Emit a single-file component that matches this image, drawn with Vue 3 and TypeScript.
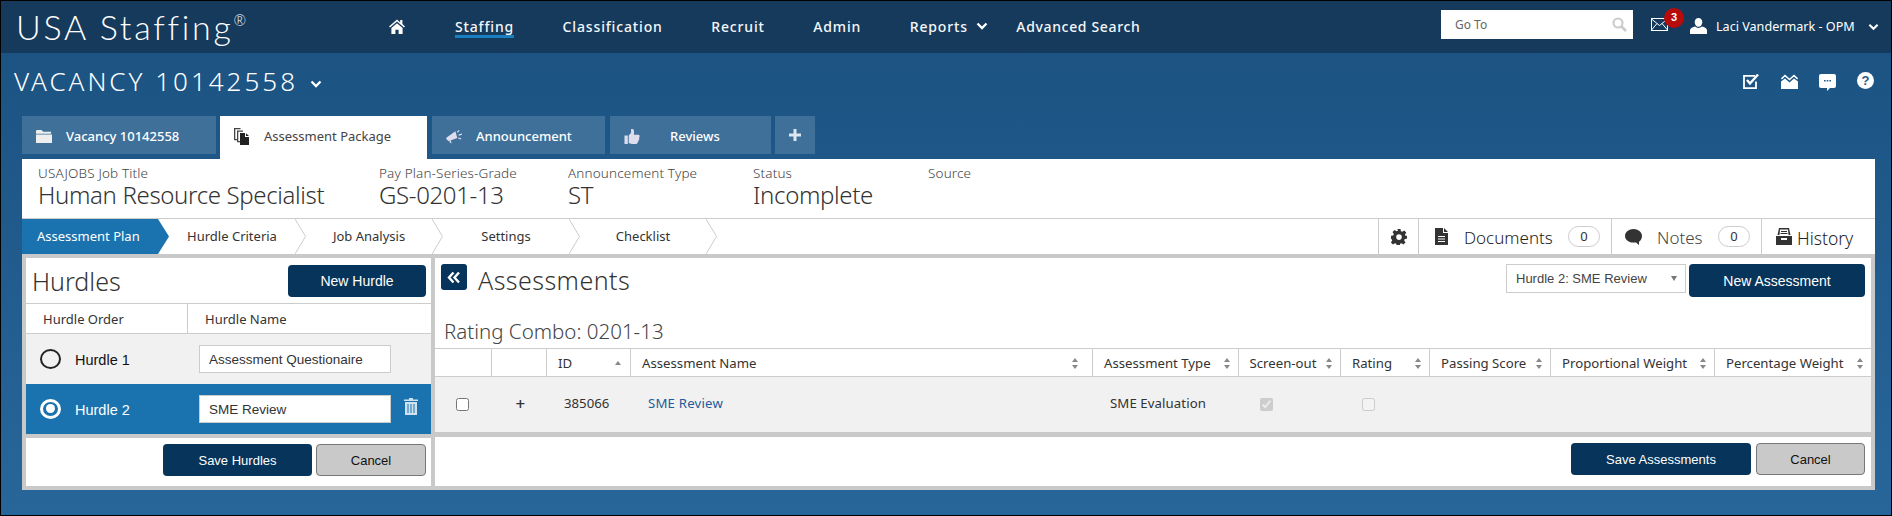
<script setup lang="ts">
const nav: string[] = ['Classification', 'Recruit', 'Admin']
const cols = [
  { label: '', sort: '' },
  { label: '', sort: '' },
  { label: 'ID', sort: 'asc' },
  { label: 'Assessment Name', sort: 'both' },
  { label: 'Assessment Type', sort: 'both' },
  { label: 'Screen-out', sort: 'both' },
  { label: 'Rating', sort: 'both' },
  { label: 'Passing Score', sort: 'both' },
  { label: 'Proportional Weight', sort: 'both' },
  { label: 'Percentage Weight', sort: 'both' },
]
const info = [
  { label: 'USAJOBS Job Title', value: 'Human Resource Specialist' },
  { label: 'Pay Plan-Series-Grade', value: 'GS-0201-13' },
  { label: 'Announcement Type', value: 'ST' },
  { label: 'Status', value: 'Incomplete' },
  { label: 'Source', value: '' },
]
const steps = ['Hurdle Criteria', 'Job Analysis', 'Settings', 'Checklist']
</script>

<template>
  <div class="page">
    <header class="topbar">
      <div class="logo">USA Staffing<sup>®</sup></div>
      <nav class="nav">
        <svg class="home" viewBox="0 0 16 15"><path fill="#fff" d="M8 0.4 0 7.4l1 1.1L8 2.6l7 5.900 1-1.100-2.600-2.300V1h-2.200v2.400zM2.400 9v6h4v-4.200h3.200V15h4V9L8 4.200z" /></svg>
        <a class="nav-item current">Staffing</a>
        <a v-for="n in nav" :key="n" class="nav-item">{{ n }}</a>
        <a class="nav-item">Reports</a>
        <svg class="chev nav-chev" viewBox="0 0 12 8"><path d="M1.500 1.500 6 6l4.500-4.500" /></svg>
        <a class="nav-item adv">Advanced Search</a>
      </nav>
      <div class="top-right">
        <div class="goto">
          <span>Go To</span>
          <svg viewBox="0 0 15 15"><circle cx="6" cy="6" r="4.500" fill="none" stroke="#ccc" stroke-width="2.200" /><path d="M9.500 9.500 14 14" stroke="#ccc" stroke-width="2.800" /></svg>
        </div>
        <div class="mail">
          <svg viewBox="0 0 17 13"><rect x="0.500" y="0.500" width="16" height="12" fill="none" stroke="#fff" /><path d="M0.500 1 8.500 7.500 16.500 1M0.500 12l5.500-6.500M16.500 12 11 5.500" fill="none" stroke="#fff" /></svg>
          <b class="badge">3</b>
        </div>
        <svg class="person" viewBox="0 0 17 16"><path fill="#fff" d="M8.500 0c2.400 0 3.800 1.700 3.800 4s-1.400 4.800-3.800 4.800S4.700 6.300 4.700 4 6.100 0 8.500 0zM5.200 8.600c.9.800 2.100 1.300 3.300 1.300s2.400-.5 3.300-1.300C14.800 9.200 17 10.600 17 12.500V16H0v-3.500c0-1.900 2.200-3.300 5.200-3.900z" /></svg>
        <span class="user">Laci Vandermark - OPM</span>
        <svg class="chev user-chev" viewBox="0 0 12 8"><path d="M1.500 1.500 6 6l4.500-4.500" /></svg>
      </div>
    </header>

    <div class="titlebar">
      <h1>VACANCY 10142558</h1>
      <svg class="chev title-chev" viewBox="0 0 12 8"><path d="M1.500 1.500 6 6l4.500-4.500" /></svg>
      <div class="title-icons">
        <svg viewBox="0 0 17 15"><path fill="none" stroke="#fff" stroke-width="1.800" d="M13 7.500v6.600H1V1.900h11" /><path fill="none" stroke="#fff" stroke-width="2.400" d="M4 6l3 3.500 8-9" /></svg>
        <svg viewBox="0 0 17 15"><path fill="#fff" d="M0 7.500 4 4.500 8.500 8.500 13 4.500 17 7.500V15H0z" /><path fill="none" stroke="#fff" stroke-width="1.600" d="M.4 5 4 1.500 8.500 5.500 13 1.500 16.600 5" /></svg>
        <svg class="cm" viewBox="0 0 17 17"><path fill="#fff" d="M2 0h13a2 2 0 0 1 2 2v10a2 2 0 0 1-2 2h-4l-3 3v-3H2a2 2 0 0 1-2-2V2a2 2 0 0 1 2-2z" /><path fill="#1f5a88" d="M5 6h1.600v1.600H5zM7.700 6h1.600v1.600H7.700zM10.400 6H12v1.600h-1.600z" /></svg>
        <span class="q">?</span>
      </div>
    </div>

    <div class="tabs">
      <div class="tab t1">
        <svg viewBox="0 0 17 14"><path fill="#eee" d="M1 0h5l1.500 2H16v2H0V1zM0 5h17v9H0z" /></svg>
        <span>Vacancy 10142558</span>
      </div>
      <div class="tab t2 active">
        <svg viewBox="0 0 16 17"><path fill="#444" d="M0 0h6.500v1.300H1.300V11H3v1.300H0z" /><path fill="#444" d="M3 2.500h6v1.300H4.300V13H6v1.300H3z" /><path fill="#222" d="M6 5h5v4h4v8H6zM12 5.300 15 8h-3z" /></svg>
        <span>Assessment Package</span>
      </div>
      <div class="tab t3">
        <svg viewBox="0 0 17 15"><path fill="#dde" d="M0 9 10 2l2 7-8 3-.5-.5L4 14l2 1-1-3.500L3 12.500 1 11z" /><path stroke="#dde" stroke-width="1.200" d="M12 3l2-2M13.500 6 17 5M13 9l3 1" /></svg>
        <span>Announcement</span>
      </div>
      <div class="tab t4">
        <svg viewBox="0 0 16 16"><path fill="#dde" d="M0 7h3.500v9H0zM4.500 7 7 4V0h1.500C10 0 10.500 2 10 6h4.500c2 0 2 2 1 3 .7 1 .5 2-.5 2.600.3 1-.2 2-1 2.400 0 1.200-.8 2-2 2H8c-1.500 0-2.500-1-3.500-1z" /></svg>
        <span>Reviews</span>
      </div>
      <div class="tab t5"><svg viewBox="0 0 12 12"><path fill="#dfe6ee" d="M4.500 0h3v4.500H12v3H7.500V12h-3V7.500H0v-3h4.500z" /></svg></div>
    </div>

    <main class="card">
      <section class="info">
        <div v-for="i in info" :key="i.label" class="info-col">
          <div class="info-label">{{ i.label }}</div>
          <div class="info-value">{{ i.value }}</div>
        </div>
      </section>

      <section class="stepsbar">
        <div class="step-active">Assessment Plan</div>
        <svg class="arrow" viewBox="0 0 11 35"><path fill="#1a73ae" d="M0 0 11 17.500 0 35z" /></svg>
        <template v-for="s in steps" :key="s">
          <div class="step">{{ s }}</div>
          <svg class="arrow" viewBox="0 0 11 35"><path fill="none" stroke="#ccc" d="M0 0 10.500 17.500 0 35" /></svg>
        </template>
        <div class="tools">
          <div class="tool gear">
            <svg viewBox="0 0 16 16"><path fill="#333" fill-rule="evenodd" d="M6.500 0h3l.4 2.200 1.400.6L13.200 1.500l2.100 2.100-1.300 1.900.6 1.400L16 6.800v2.900l-2.200.4-.6 1.400 1.300 1.900-2.100 2.100-1.900-1.300-1.400.6-.4 2.200h-3l-.4-2.200-1.400-.6-1.900 1.300-2.100-2.100 1.300-1.900-.6-1.400L0 9.700V6.800l2.200-.4.6-1.400-1.300-1.900 2.100-2.100 1.900 1.300 1.400-.6zM8 5.300a2.800 2.800 0 1 0 0 5.600 2.800 2.800 0 0 0 0-5.600z" /></svg>
          </div>
          <div class="tool docs">
            <svg viewBox="0 0 13 17"><path fill="#333" fill-rule="evenodd" d="M0 0h8v5h5v12H0zM9 0l4 4H9zM3 8v1h7V8zM3 10.500v1h7v-1zM3 13v1h7v-1z" /></svg>
            <span class="tool-text">Documents</span><span class="pill">0</span>
          </div>
          <div class="tool notes">
            <svg viewBox="0 0 17 16"><path fill="#333" d="M8.500 0C13 0 17 3 17 7c0 2.500-1.200 4.500-3 5.700V16l-3-2.400H8.500C4 13.600 0 11 0 7s4-7 8.500-7z" /></svg>
            <span class="tool-text">Notes</span><span class="pill">0</span>
          </div>
          <div class="tool hist">
            <svg viewBox="0 0 16 17"><path fill="#333" fill-rule="evenodd" d="M3 0h10l1.500 7h-2L12 1.500H4L3.500 7h-2zM5 3h6v1H5zM4.500 5h7v1h-7zM0 8h16v9H0zM5 10v2h6v-2z" /></svg>
            <span class="tool-text">History</span>
          </div>
        </div>
      </section>

      <section class="content">
        <div class="panel left">
          <div class="left-head">
            <h2>Hurdles</h2>
            <button class="btn primary new-hurdle">New Hurdle</button>
          </div>
          <div class="left-cols">
            <div class="lc">Hurdle Order</div>
            <div class="lc">Hurdle Name</div>
          </div>
          <div class="hrow">
            <span class="radio"></span>
            <span class="hname">Hurdle 1</span>
            <input class="hinput" value="Assessment Questionaire" />
          </div>
          <div class="hrow on">
            <span class="radio"><i></i></span>
            <span class="hname">Hurdle 2</span>
            <input class="hinput" value="SME Review" />
            <svg class="trash" viewBox="0 0 14 17"><path fill="#cfe2f1" fill-rule="evenodd" d="M5 0h4v1.500h5V3H0V1.500h5zM1 4h12v13H1zM3.500 6v9h1V6zM6.500 6v9h1V6zM9.500 6v9h1V6z" /></svg>
          </div>
          <div class="foot left-foot">
            <button class="btn primary save-h">Save Hurdles</button>
            <button class="btn cancel">Cancel</button>
          </div>
        </div>

        <div class="panel right">
          <div class="right-head">
            <button class="collapse" aria-label="Collapse">
              <svg viewBox="0 0 14 12"><path fill="none" stroke="#fff" stroke-width="2.400" d="M6.500 1 2 6l4.500 5M12 1 7.500 6l4.500 5" /></svg>
            </button>
            <h2>Assessments</h2>
            <div class="right-actions">
              <div class="select">
                <span>Hurdle 2: SME Review</span>
                <i class="sel-arrow"></i>
              </div>
              <button class="btn primary new-a">New Assessment</button>
            </div>
          </div>
          <h3>Rating Combo: 0201-13</h3>
          <div class="table">
            <div class="thead">
              <div v-for="(c, i) in cols" :key="i" class="th">
                <span>{{ c.label }}</span>
                <svg v-if="c.sort === 'both'" class="sort" viewBox="0 0 6 11"><path fill="#888" d="M3 0l3 4H0zM3 11 0 7h6z" /></svg>
                <svg v-if="c.sort === 'asc'" class="sort" viewBox="0 0 6 11"><path fill="#888" d="M3 3l3 4H0z" /></svg>
              </div>
            </div>
            <div class="tbody">
              <div class="td first"><input type="checkbox" class="cb" /></div>
              <div class="td plus">+</div>
              <div class="td id">385066</div>
              <div class="td link">SME Review</div>
              <div class="td type">SME Evaluation</div>
              <div class="td center"><input type="checkbox" class="cb" checked disabled /></div>
              <div class="td center"><input type="checkbox" class="cb" disabled /></div>
              <div class="td"></div>
              <div class="td"></div>
              <div class="td"></div>
            </div>
          </div>
          <div class="foot right-foot">
            <button class="btn primary save-a">Save Assessments</button>
            <button class="btn cancel cancel-a">Cancel</button>
          </div>
        </div>
      </section>
    </main>
  </div>
</template>

<style>
html, body { margin: 0; padding: 0; }
</style>

<style scoped>
* { box-sizing: border-box; }
.page {
  width: 1892px; height: 516px; border: 1px solid #000; overflow: hidden;
  background: linear-gradient(180deg, #1a5180 0%, #28669a 100%);
  font-family: "Noto Sans", "Open Sans", sans-serif; color: #333;
}
h1, h2, h3 { margin: 0; font-weight: 300; }
.topbar { height: 52px; background: #163a5c; display: flex; align-items: center; }
.logo { width: 388px; padding-left: 15px; font-family: "Lato", sans-serif; font-weight: 300; font-size: 34px; color: #fff; letter-spacing: 2.700px; line-height: 1; margin-top: -1px; white-space: nowrap; }
.logo sup { font-size: 15px; vertical-align: 14px; line-height: 0; letter-spacing: 0; }
.nav { display: flex; align-items: center; height: 100%; color: #fff; font-size: 14px; }
.home { width: 16px; height: 15px; margin-top: -2px; margin-right: 50px; }
.nav-item { margin-right: 48.500px; font-weight: 500; letter-spacing: .85px; color: #f4f7fa; position: relative; margin-top: -2px; }
.current::after { content: ""; position: absolute; left: 0; right: 0; bottom: -2px; height: 3px; background: #1a7fc1; }
.chev { fill: none; stroke: #fff; stroke-width: 2.300; }
.nav-chev { width: 12px; height: 8px; margin-left: -40px; margin-right: 28px; margin-top: -2px; }
.adv { margin-right: 0; letter-spacing: .65px; }
.top-right { margin-left: auto; display: flex; align-items: center; height: 100%; padding-right: 12px; }
.goto { width: 192px; height: 29px; background: #fff; display: flex; align-items: center; justify-content: space-between; padding: 0 6px 0 14px; font-size: 12px; color: #666; margin-top: -5px; }
.goto svg { width: 15px; height: 15px; }
.mail { position: relative; width: 17px; height: 13px; margin-left: 18px; margin-top: -5px; }
.mail svg { display: block; width: 17px; height: 13px; }
.badge { position: absolute; left: 13px; top: -10px; width: 20px; height: 20px; border-radius: 50%; background: #b80c0c; color: #fff; font-size: 11px; font-family: "Liberation Sans", sans-serif; text-align: center; line-height: 18px; }
.person { width: 17px; height: 16px; margin-left: 22px; margin-top: -3px; }
.user { margin-left: 9px; color: #fff; font-size: 12.600px; margin-top: -1px; width: 141px; white-space: nowrap; }
.user-chev { width: 11px; height: 8px; margin-left: 11px; margin-top: -1px; }
.titlebar { height: 63px; display: flex; padding: 13px 17px 0 13px; align-items: flex-start; color: #fff; }
.titlebar h1 { font-size: 26px; line-height: 30px; letter-spacing: 3px; white-space: nowrap; }
.title-chev { width: 12px; height: 8px; margin: 14px 0 0 12px; }
.title-icons { margin-left: auto; display: flex; gap: 21px; align-items: center; height: 18px; margin-top: 6px; }
.title-icons svg { width: 17px; height: 15px; display: block; }
.title-icons .cm { height: 17px; margin-top: 2px; }
.q { width: 17px; height: 17px; border-radius: 50%; background: #fff; color: #1f5a88; font-weight: 700; font-size: 13px; line-height: 17px; text-align: center; font-family: "Liberation Sans", sans-serif; margin-top: -1px; }

.tabs { display: flex; align-items: flex-start; height: 43px; margin-left: 21px; }
.tab { height: 38px; background: #3f7099; color: #fff; display: flex; align-items: center; font-size: 13px; font-weight: 500; padding-top: 2px; }
.tab svg { width: 16px; height: 15px; flex: none; }
.tab.active { height: 43px; background: #fff; color: #444; padding-bottom: 5px; }
.t2 svg { height: 17px; }
.t1 { width: 194px; padding-left: 14px; }
.t1 span { margin-left: 14px; }
.t2 { width: 207px; margin-left: 4px; padding-left: 14px; font-weight: 400; }
.t2 span { margin-left: 14px; }
.t3 { width: 173px; margin-left: 5px; padding-left: 14px; }
.t3 span { margin-left: 14px; }
.t4 { width: 161px; margin-left: 5px; padding-left: 14px; }
.t4 span { margin-left: 30px; }
.t5 { width: 40px; margin-left: 4px; justify-content: center; padding-top: 0; }
.t5 svg { width: 12px; height: 12px; }

.card { margin: 0 16px 0 21px; background: #fff; }
.info { height: 60px; border-bottom: 1px solid #ccc; display: grid; grid-template-columns: 341px 189px 185px 175px 1fr; padding: 6px 0 0 16px; }
.info-label { font-size: 13.500px; line-height: 16px; font-weight: 300; color: #444; letter-spacing: .15px; }
.info-value { font-size: 24px; line-height: 30px; font-weight: 300; color: #333; margin-top: -1px; letter-spacing: -.35px; }

.stepsbar { height: 35px; display: flex; align-items: stretch; font-size: 13px; color: #333; }
.step-active { width: 136px; background: #1a73ae; color: #fff; padding-left: 15px; line-height: 35px; }
.arrow { width: 11px; height: 35px; flex: none; }
.step { width: 126px; text-align: center; line-height: 35px; }
.tools { margin-left: auto; display: flex; }
.tool { border-left: 1px solid #ccc; display: flex; align-items: center; height: 35px; }
.gear { width: 40px; justify-content: center; }
.gear svg { width: 16px; height: 16px; }
.docs { width: 193px; padding-left: 16px; }
.docs svg { width: 13px; height: 17px; }
.notes { width: 150px; padding-left: 13px; }
.notes svg { width: 17px; height: 16px; }
.hist { width: 114px; padding-left: 14px; }
.hist svg { width: 16px; height: 17px; }
.tool-text { font-size: 17px; font-weight: 300; color: #222; padding-top: 2px; }
.docs .tool-text { margin-left: 16px; width: 104px; }
.notes .tool-text { margin-left: 15px; width: 61px; color: #444; }
.hist .tool-text { margin-left: 5px; font-size: 17.500px; padding-top: 3px; }
.pill { width: 32px; height: 21px; border: 1px solid #ccc; border-radius: 11px; text-align: center; font-size: 13px; line-height: 19px; }

.content { background: #c9c9c9; padding: 4px 4px 4px; display: grid; grid-template-columns: 405px 1436px; gap: 4px; height: 236px; }
.panel { background: #fff; display: flex; flex-direction: column; height: 228px; }
.left-head { height: 46px; border-bottom: 1px solid #ccc; display: flex; justify-content: space-between; padding: 7px 5px 0 6px; }
.left-head h2 { font-size: 25px; line-height: 32px; }
.btn { border: 0; height: 32px; border-radius: 4px; font-family: "Liberation Sans", sans-serif; font-size: 13px; padding: 0; }
.primary { background: #07345a; color: #fff; font-weight: 400; }
.new-hurdle { width: 138px; font-size: 14px; }
.left-cols { height: 30px; border-bottom: 1px solid #ccc; display: grid; grid-template-columns: 161px 1fr; font-size: 13px; line-height: 30px; color: #333; }
.lc { padding-left: 17px; }
.lc + .lc { border-left: 1px solid #ccc; }
.hrow { height: 50px; background: #f1f1f1; display: flex; align-items: center; padding-left: 14px; position: relative; font-family: "Liberation Sans", sans-serif; }
.hrow.on { background: #1a73ae; color: #fff; }
.radio { width: 21px; height: 20px; border-radius: 50%; border: 2.500px solid #222; display: flex; align-items: center; justify-content: center; margin-top: -1px; }
.on .radio { border: 3px solid #fff; }
.radio i { width: 9px; height: 9px; border-radius: 50%; background: #fff; display: block; }
.hname { margin-left: 14px; font-size: 14.500px; width: 124px; color: #111; margin-top: 2px; }
.on .hname { color: #fff; }
.hinput { width: 192px; height: 28px; border: 1px solid #ccc; background: #fff; padding: 0 9px; font-family: "Liberation Sans", sans-serif; font-size: 13.500px; color: #333; outline: none; }
.trash { width: 14px; height: 17px; margin-left: 13px; margin-top: -5px; }
.foot { display: flex; justify-content: flex-end; align-items: flex-start; }
.left-foot { height: 52px; border-top: 4px solid #c9c9c9; padding: 6px 5px 0 0; gap: 4px; }
.save-h { width: 149px; }
.cancel { width: 110px; background: #c9c9c9; border: 1px solid #777; color: #111; }

.right-head { height: 60px; display: flex; align-items: flex-start; padding: 6px 6px 0 6px; }
.collapse { width: 26px; height: 26px; background: #07345a; border: 0; border-radius: 3px; padding: 0; display: flex; align-items: center; justify-content: center; }
.collapse svg { width: 14px; height: 13px; }
.right-head h2 { font-size: 25px; line-height: 32px; margin-left: 11px; color: #333; letter-spacing: .45px; }
.right-actions { margin-left: auto; display: flex; align-items: flex-start; gap: 3px; }
.select { width: 180px; height: 29px; border: 1px solid #ccc; display: flex; align-items: center; justify-content: space-between; padding: 0 8px 0 9px; font-family: "Liberation Sans", sans-serif; font-size: 13px; color: #444; }
.sel-arrow { width: 0; height: 0; border-left: 3.500px solid transparent; border-right: 3.500px solid transparent; border-top: 5px solid #777; }
.new-a { width: 176px; height: 33px; font-size: 14px; }
h3 { height: 30px; font-size: 20.500px; line-height: 26px; padding-left: 9px; color: #444; }
.table { border-top: 1px solid #ccc; }
.thead, .tbody { display: grid; grid-template-columns: 55.500px 55.500px 84px 462px 145.500px 102.500px 89px 121px 164px 157px; }
.thead { height: 28px; border-bottom: 1px solid #ccc; font-size: 13.200px; }
.th { border-left: 1px solid #ccc; display: flex; align-items: center; justify-content: space-between; padding: 1px 8px 0 11px; white-space: nowrap; color: #333; }
.th:first-child { border-left: 0; }
.th:nth-child(3) { padding-right: 9px; }
.th:nth-child(4) { padding-right: 14px; }
.sort { width: 6px; height: 11px; flex: none; }
.tbody { height: 55px; background: #f1f1f1; font-size: 13.200px; }
.td { display: flex; align-items: center; padding-bottom: 3px; }
.first { padding-left: 21px; padding-bottom: 1px; }
.plus { font-size: 17px; font-weight: 500; padding-left: 25px; }
.id { padding-left: 18px; }
.link { padding-left: 18px; color: #1f5c99; letter-spacing: .2px; }
.type { padding-left: 18px; letter-spacing: .1px; }
.center { padding-left: 22px; padding-bottom: 1px; }
.cb { width: 13px; height: 13px; margin: 0; }
.right-foot { height: 54px; border-top: 5px solid #c9c9c9; padding: 6px 6px 0 0; gap: 5px; }
.save-a { width: 180px; }
.cancel-a { width: 109px; }
</style>
